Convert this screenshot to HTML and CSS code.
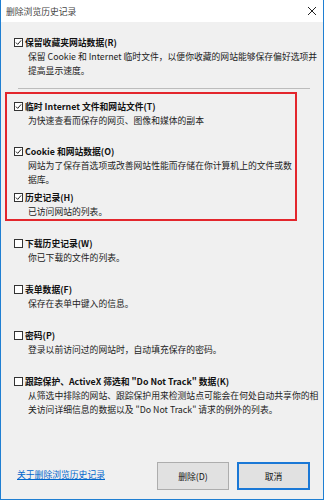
FILE: index.html
```html
<!DOCTYPE html>
<html lang="zh-CN">
<head>
<meta charset="utf-8">
<title>删除浏览历史记录</title>
<link rel="stylesheet" href="styles.css">
</head>
<body>
<div class="window">
  <div class="titlebar">
    <span class="title">删除浏览历史记录</span>
    <svg class="close" width="10" height="10" viewBox="0 0 10 10"><path d="M1 1 L9 9 M9 1 L1 9" stroke="#222" stroke-width="1" fill="none"/></svg>
  </div>
  <div class="content">
    <div class="item first">
      <div class="row"><span class="cb checked"><svg width="9" height="9" viewBox="0 0 9 9"><rect x="0.5" y="0.5" width="8" height="8" fill="#fff" stroke="#333"/><path d="M2 4.6 L3.7 6.4 L7.1 2.4" stroke="#222" stroke-width="1" fill="none"/></svg></span><span class="label">保留收藏夹网站数据(R)</span></div>
      <div class="desc">保留 Cookie 和 Internet 临时文件，以便你收藏的网站能够保存偏好选项并<br>提高显示速度。</div>
    </div>
    <div class="sep"></div>
    <div class="highlight">
      <div class="item">
        <div class="row"><span class="cb"><svg width="9" height="9" viewBox="0 0 9 9"><rect x="0.5" y="0.5" width="8" height="8" fill="#fff" stroke="#333"/><path d="M2 4.6 L3.7 6.4 L7.1 2.4" stroke="#222" stroke-width="1" fill="none"/></svg></span><span class="label">临时 Internet 文件和网站文件(T)</span></div>
        <div class="desc">为快速查看而保存的网页、图像和媒体的副本</div>
      </div>
      <div class="item">
        <div class="row"><span class="cb"><svg width="9" height="9" viewBox="0 0 9 9"><rect x="0.5" y="0.5" width="8" height="8" fill="#fff" stroke="#333"/><path d="M2 4.6 L3.7 6.4 L7.1 2.4" stroke="#222" stroke-width="1" fill="none"/></svg></span><span class="label">Cookie 和网站数据(O)</span></div>
        <div class="desc">网站为了保存首选项或改善网站性能而存储在你计算机上的文件或数<br>据库。</div>
      </div>
      <div class="item last">
        <div class="row"><span class="cb"><svg width="9" height="9" viewBox="0 0 9 9"><rect x="0.5" y="0.5" width="8" height="8" fill="#fff" stroke="#333"/><path d="M2 4.6 L3.7 6.4 L7.1 2.4" stroke="#222" stroke-width="1" fill="none"/></svg></span><span class="label">历史记录(H)</span></div>
        <div class="desc">已访问网站的列表。</div>
      </div>
    </div>
    <div class="plain">
      <div class="item">
        <div class="row"><span class="cb"><svg width="9" height="9" viewBox="0 0 9 9"><rect x="0.5" y="0.5" width="8" height="8" fill="#fff" stroke="#333"/></svg></span><span class="label">下载历史记录(W)</span></div>
        <div class="desc">你已下载的文件的列表。</div>
      </div>
      <div class="item">
        <div class="row"><span class="cb"><svg width="9" height="9" viewBox="0 0 9 9"><rect x="0.5" y="0.5" width="8" height="8" fill="#fff" stroke="#333"/></svg></span><span class="label">表单数据(F)</span></div>
        <div class="desc">保存在表单中键入的信息。</div>
      </div>
      <div class="item">
        <div class="row"><span class="cb"><svg width="9" height="9" viewBox="0 0 9 9"><rect x="0.5" y="0.5" width="8" height="8" fill="#fff" stroke="#333"/></svg></span><span class="label">密码(P)</span></div>
        <div class="desc">登录以前访问过的网站时，自动填充保存的密码。</div>
      </div>
      <div class="item last">
        <div class="row"><span class="cb"><svg width="9" height="9" viewBox="0 0 9 9"><rect x="0.5" y="0.5" width="8" height="8" fill="#fff" stroke="#333"/></svg></span><span class="label">跟踪保护、ActiveX 筛选和 "Do Not Track" 数据(K)</span></div>
        <div class="desc">从筛选中排除的网站、跟踪保护用来检测站点可能会在何处自动共享你的相<br>关访问详细信息的数据以及 "Do Not Track" 请求的例外的列表。</div>
      </div>
    </div>
  </div>
  <div class="footer">
    <a class="link" href="#">关于删除浏览历史记录</a>
    <div class="buttons">
      <button class="btn">删除(D)</button>
      <button class="btn default">取消</button>
    </div>
  </div>
</div>
</body>
</html>
```
FILE: styles.css
```css
html, body {
  margin: 0;
  padding: 0;
}
body {
  font-family: "Noto Sans CJK SC", "Noto Sans", sans-serif;
  font-size: 8.8px;
  color: #1a1a1a;
}
.window {
  width: 324px;
  height: 500px;
  box-sizing: border-box;
  border: 1px solid #1f7fd2;
  border-top: none;
  background: #f0f0f0;
  display: flex;
  flex-direction: column;
}
.titlebar {
  height: 22px;
  background: #fff;
  display: flex;
  align-items: center;
  justify-content: space-between;
  padding: 0 6px 0 5px;
}
.title {
  color: #444;
  line-height: 11px;
}
.close {
  display: block;
}
.content {
  padding-top: 14.5px;
}
.item {
  height: 45.5px;
  padding-left: 13px;
}
.item.first,
.item.last {
  height: auto;
}
.row {
  display: flex;
  align-items: center;
  height: 11px;
}
.cb {
  width: 9px;
  height: 9px;
  margin-right: 2px;
  display: block;
}
.cb svg {
  display: block;
}
.label {
  font-weight: 700;
  line-height: 11px;
  color: #111;
  white-space: nowrap;
}
.desc {
  margin-top: 2px;
  padding-left: 14px;
  line-height: 14px;
  white-space: nowrap;
  color: #222;
}
.sep {
  margin: 10.5px 13px 0 17px;
  height: 1px;
  background: #bcbcbc;
}
.highlight {
  margin: 3px 0 0 4px;
  width: 292px;
  box-sizing: border-box;
  border: 2px solid #e3262c;
  padding: 6.5px 0 0.5px 0;
}
.highlight .item {
  padding-left: 7px;
}
.plain {
  margin-top: 16.5px;
}
.plain .item {
  height: 46px;
}
.plain .item.last {
  height: auto;
}
.footer {
  margin-top: auto;
  display: flex;
  align-items: center;
  justify-content: space-between;
  padding: 0 13px 9px 16px;
}
.link {
  color: #0066cc;
  text-decoration: underline;
  line-height: 11px;
  margin-bottom: 4px;
}
.buttons {
  display: flex;
  gap: 8px;
}
.btn {
  width: 72px;
  height: 28px;
  box-sizing: border-box;
  background: #e1e1e1;
  border: 1px solid #adadad;
  font-family: "Noto Sans CJK SC", "Noto Sans", sans-serif;
  font-size: 8.8px;
  color: #111;
  padding: 0;
  margin: 0;
}
.btn.default {
  width: 73px;
  border: 2px solid #1a78d6;
}
```
